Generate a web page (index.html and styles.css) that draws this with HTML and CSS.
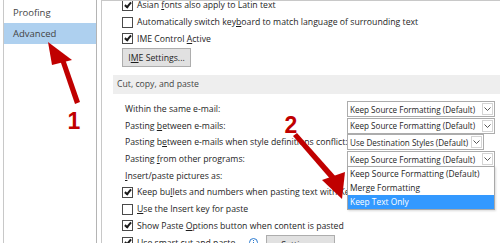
FILE: index.html
```html
<!DOCTYPE html>
<html>
<head>
  <meta charset="UTF-8">
  <title>Word Options - Advanced</title>
  <link rel="stylesheet" href="styles.css">
</head>
<body>
  <div class="ventana">
    <nav class="menu">
      <div class="menu-item">Proofing</div>
      <div class="menu-item activo">Advanced</div>
    </nav>

    <section class="contenido">
      <div class="desplazado">
        <div class="fila"><span class="check marcado"></span><span>Asian <u>f</u>onts also apply to Latin text</span></div>
        <div class="fila"><span class="check"></span><span>Automatically switch key<u>b</u>oard to match language of surrounding text</span></div>
        <div class="fila"><span class="check marcado"></span><span>IME Control <u>A</u>ctive</span></div>
        <button class="boton">I<u>M</u>E Settings...</button>

        <h3 class="seccion">Cut, copy, and paste</h3>

        <div class="fila opcion">
          <span class="etiqueta">Within the same e-mail:</span>
          <div class="combo"><span class="combo-texto">Keep Source Formatting (Default)</span><span class="combo-flecha"><svg width="7" height="4" viewBox="0 0 7 4"><path d="M0.5 0.5 L3.5 3.5 L6.5 0.5" stroke="#555" fill="none"/></svg></span></div>
        </div>
        <div class="fila opcion">
          <span class="etiqueta">Pasting <u>b</u>etween e-mails:</span>
          <div class="combo"><span class="combo-texto">Keep Source Formatting (Default)</span><span class="combo-flecha"><svg width="7" height="4" viewBox="0 0 7 4"><path d="M0.5 0.5 L3.5 3.5 L6.5 0.5" stroke="#555" fill="none"/></svg></span></div>
        </div>
        <div class="fila opcion">
          <span class="etiqueta">Pasting b<u>e</u>tween e-mails when style definitions conflict:</span>
          <div class="combo corto"><span class="combo-texto">Use Destination Styles (Default)</span><span class="combo-flecha"><svg width="7" height="4" viewBox="0 0 7 4"><path d="M0.5 0.5 L3.5 3.5 L6.5 0.5" stroke="#555" fill="none"/></svg></span></div>
        </div>
        <div class="fila opcion">
          <span class="etiqueta">Pasting <u>f</u>rom other programs:</span>
          <div class="combo abierto"><span class="combo-texto">Keep Source Formatting (Default)</span><span class="combo-flecha"><svg width="7" height="4" viewBox="0 0 7 4"><path d="M0.5 0.5 L3.5 3.5 L6.5 0.5" stroke="#555" fill="none"/></svg></span>
            <ul class="lista">
              <li>Keep Source Formatting (Default)</li>
              <li>Merge Formatting</li>
              <li class="elegido">Keep Text Only</li>
            </ul>
          </div>
        </div>
        <div class="fila opcion">
          <span class="etiqueta"><u>I</u>nsert/paste pictures as:</span>
        </div>
        <div class="fila"><span class="check marcado"></span><span>Keep bu<u>l</u>lets and numbers when pasting text with Keep Text Only option</span></div>
        <div class="fila"><span class="check"></span><span><u>U</u>se the Insert key for paste</span></div>
        <div class="fila"><span class="check marcado"></span><span>Show Paste <u>O</u>ptions button when content is pasted</span></div>
        <div class="fila"><span class="check marcado"></span><span>Use smart cut and paste</span>
          <svg class="info" width="9" height="9" viewBox="0 0 9 9"><circle cx="4.5" cy="4.5" r="4" fill="none" stroke="#2a7ad0"/><rect x="4" y="4" width="1" height="3" fill="#2a7ad0"/><rect x="4" y="2" width="1" height="1" fill="#2a7ad0"/></svg>
          <button class="boton ajustes">Settings...</button>
        </div>
      </div>
    </section>

    <!-- flechas de la anotacion -->
    <svg class="anotaciones" width="500" height="243" viewBox="0 0 500 243">
      <g fill="#c00000" stroke="none">
        <polygon points="48,42 52,65 72,60"/>
        <polygon points="60,60 65,59 80,102 75,104"/>
        <polygon points="342,199 322,180 345,172"/>
        <polygon points="293,136 297,133 337,178 332,181"/>
      </g>
      <text x="74" y="129" class="numero">1</text>
      <text x="291" y="133" class="numero">2</text>
    </svg>
  </div>
</body>
</html>
```

FILE: styles.css
```css
/* Estilos generales */
body {
  margin: 0;
  font-family: 'Open Sans', sans-serif;
  font-size: 8.7px;
  color: #1e1e1e;
  background: #fff;
}

.ventana {
  position: relative;
  width: 500px;
  height: 243px;
  overflow: hidden;
  display: flex;
}

/* Menu lateral */
.menu {
  width: 92px;
  margin-left: 3px;
  padding-top: 3px;
  border-left: 1px solid #c8c8c8;
  border-right: 1px solid #b4b4b4;
}

.menu-item {
  height: 20px;
  line-height: 20px;
  padding-left: 9px;
  color: #444;
  font-size: 9.5px;
}

.menu-item.activo {
  height: 21px;
  line-height: 21px;
  background-color: #aed0ef;
}

/* Panel de opciones */
.contenido {
  flex: 1;
  margin-left: 4px;
  border-left: 1px solid #c8c8c8;
  border-top: 1px solid #c8c8c8;
  overflow: hidden;
}

.desplazado {
  margin-top: -4px;
}

.fila {
  height: 16.7px;
  display: flex;
  align-items: center;
  padding-left: 20px;
  white-space: nowrap;
}

.fila.opcion {
  padding-left: 23px;
}

.etiqueta {
  width: 222px;
  flex: none;
}

.check {
  width: 9px;
  height: 9px;
  border: 1px solid #4a4a4a;
  margin-right: 4px;
  display: flex;
  align-items: center;
  justify-content: center;
  flex: none;
  background: #fff;
}

.check.marcado::after {
  content: '';
  width: 2px;
  height: 5px;
  margin-top: -2px;
  border: solid #1a1a1a;
  border-width: 0 2px 2px 0;
  transform: rotate(40deg);
}

.boton {
  display: block;
  margin: 1px 0 0 20px;
  width: 69px;
  height: 19px;
  padding: 0;
  border: 1px solid #adadad;
  background-color: #e1e1e1;
  font-family: inherit;
  font-size: 8.7px;
  color: #1e1e1e;
  text-align: center;
}

.boton.ajustes {
  display: inline-block;
  margin: 4px 0 0 8px;
}

.info {
  margin-left: 14px;
  flex: none;
}

.seccion {
  margin: 8px 0 6.6px 11px;
  height: 19px;
  line-height: 19px;
  padding-left: 4px;
  background-color: #eeeeee;
  color: #444;
  font-size: 8.7px;
  font-weight: normal;
}

/* Listas desplegables */
.combo {
  position: relative;
  width: 148px;
  height: 16px;
  box-sizing: border-box;
  border: 1px solid #acacac;
  display: flex;
  align-items: center;
  background: #fff;
  font-size: 8.1px;
}

.combo.corto {
  width: 137px;
}

.combo-texto {
  flex: 1;
  padding-left: 2px;
  overflow: hidden;
}

.combo-flecha {
  width: 11px;
  height: 12px;
  margin-right: 1px;
  border: 1px solid #d4d4d4;
  box-sizing: border-box;
  display: flex;
  align-items: center;
  justify-content: center;
}

.lista {
  position: absolute;
  top: 100%;
  left: -1px;
  width: 148px;
  box-sizing: border-box;
  margin: 0;
  padding: 0;
  list-style-type: none;
  background: #fff;
  border: 1px solid #a8a8a8;
  box-shadow: 1px 1px 2px rgba(0, 0, 0, 0.15);
  z-index: 2;
  font-size: 8.4px;
}

.lista li {
  height: 14px;
  line-height: 14px;
  padding-left: 2px;
}

.lista li.elegido {
  background-color: #3399ff;
  color: #fff;
}

/* Anotaciones en rojo */
.anotaciones {
  position: absolute;
  top: 0;
  left: 0;
  z-index: 3;
  pointer-events: none;
}

.numero {
  font-family: 'Liberation Sans', sans-serif;
  font-weight: bold;
  font-size: 23px;
  fill: #c00000;
  text-anchor: middle;
}
```
